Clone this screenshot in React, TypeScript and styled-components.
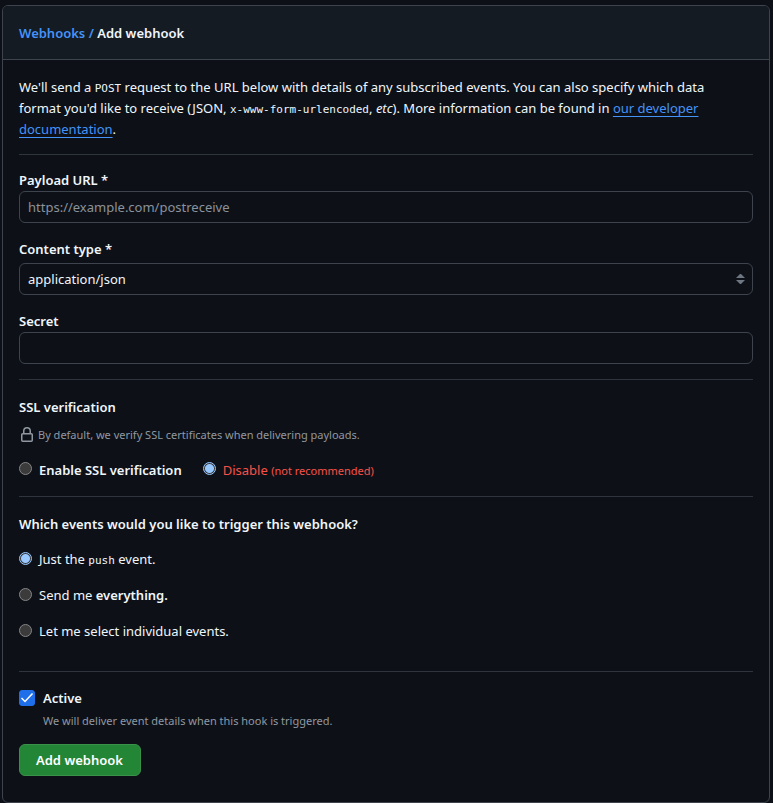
import React, { useState } from "react";
import styled, { createGlobalStyle, css } from "styled-components";

const color = {
  canvas: "#0d1117",
  header: "#151b23",
  border: "#3d444d",
  divider: "#2f353d",
  text: "#f0f6fc",
  muted: "#9198a1",
  placeholder: "#8b929b",
  accent: "#4493f8",
  danger: "#f85149",
};

const GlobalStyle = createGlobalStyle`
  *, *::before, *::after { box-sizing: border-box; }
  body {
    margin: 0;
    background: ${color.canvas};
    color: ${color.text};
    font: 400 13px/21px "Noto Sans", "Open Sans", sans-serif;
  }
`;

const Page = styled.main`
  padding: 5px 3px 0 2px;
`;

const Card = styled.section`
  border: 1px solid ${color.border};
  border-radius: 6px;
  overflow: hidden;
`;

const CardHeader = styled.header`
  padding: 17px 16px 15px;
  background: ${color.header};
  border-bottom: 1px solid ${color.border};
`;

const Title = styled.h1`
  margin: 0;
  font-size: 13px;
  font-weight: 600;
  line-height: 21px;
`;

const CrumbLink = styled.a`
  color: ${color.accent};
  text-decoration: none;
`;

const Form = styled.form`
  display: flex;
  flex-direction: column;
  padding: 17px 16px 26px;
`;

const Intro = styled.p`
  margin: 0;
  padding-right: 16px;
`;

const TextLink = styled.a`
  color: ${color.accent};
  text-decoration: underline;
  text-underline-offset: 3px;
`;

const Code = styled.code`
  font: 11px "DejaVu Sans Mono", "Liberation Mono", monospace;
`;

const Divider = styled.hr`
  width: 100%;
  height: 1px;
  margin: 15px 0;
  border: 0;
  background: ${color.divider};

  ${Intro} + & {
    margin-top: 14px;
  }
`;

const Field = styled.div<{ $gap?: number }>`
  display: flex;
  flex-direction: column;
  gap: ${(p) => p.$gap ?? 0}px;

  & + & {
    margin-top: 16px;
  }
`;

const FieldLabel = styled.label`
  font-weight: 600;
`;

const control = css`
  width: 100%;
  height: 32px;
  padding: 0 8px;
  border: 1px solid ${color.border};
  border-radius: 6px;
  background: ${color.canvas};
  color: ${color.text};
  font: inherit;
`;

const TextInput = styled.input`
  ${control}

  &::placeholder {
    color: ${color.placeholder};
    opacity: 1;
  }
`;

const SelectBox = styled.div`
  display: grid;
  align-items: center;

  & > * {
    grid-area: 1 / 1;
  }
`;

const Select = styled.select`
  ${control}
  appearance: none;
`;

const SelectArrows = styled.svg`
  justify-self: end;
  margin-right: 8px;
  pointer-events: none;
`;

const Group = styled.fieldset`
  display: flex;
  flex-direction: column;
  min-width: 0;
  margin: 0;
  padding: 2px 0 0;
  border: 0;
`;

const GroupTitle = styled.legend`
  float: left;
  width: 100%;
  padding: 0;
  font-weight: 600;
`;

const Note = styled.p`
  display: flex;
  align-items: center;
  gap: 3px;
  margin: 8px 0 0;
  color: ${color.muted};
  font-size: 11px;
  line-height: 18px;
`;

const ChoiceRow = styled.div`
  display: flex;
  flex-wrap: wrap;
  gap: 21px;
  margin-top: 16px;
`;

const ChoiceList = styled.div`
  display: flex;
  flex-direction: column;
  gap: 15px;
  padding: 14px 0;
`;

const Choice = styled.label<{ $bold?: boolean; $danger?: boolean }>`
  display: flex;
  align-items: flex-start;
  gap: 7px;
  font-weight: ${(p) => (p.$bold ? 600 : 400)};
  color: ${(p) => (p.$danger ? color.danger : color.text)};
`;

const Strong = styled.strong`
  font-weight: 600;
`;

const Small = styled.small`
  font-size: 11px;
`;

const Radio = styled.input`
  appearance: none;
  flex: none;
  width: 13px;
  height: 13px;
  margin: 3px 0 0;
  border: 1px solid #858585;
  border-radius: 50%;
  background: #3b3b3b;

  ${ChoiceRow} & {
    margin-top: 2px;
  }

  &:checked {
    border-color: #99c8ff;
    background: radial-gradient(circle, #99c8ff 0 4px, #3b3b3b 5px);
  }
`;

const ActiveRow = styled.div`
  display: grid;
  grid-template-columns: 16px 1fr;
  column-gap: 8px;
  padding-top: 1px;
`;

const CheckMark = styled.span`
  display: grid;
  margin-top: 2px;
  width: 16px;
  height: 16px;

  & > * {
    grid-area: 1 / 1;
  }

  & > svg {
    pointer-events: none;
    visibility: hidden;
  }

  & > input:checked + svg {
    visibility: visible;
  }
`;

const Checkbox = styled.input`
  appearance: none;
  width: 16px;
  height: 16px;
  margin: 0;
  border: 1px solid ${color.border};
  border-radius: 3px;

  &:checked {
    border-color: #1f6feb;
    background: #1f6feb;
  }
`;

const Hint = styled.p`
  grid-column: 2;
  margin: 3px 0 0;
  color: ${color.muted};
  font-size: 11px;
  line-height: 18px;
`;

const SubmitButton = styled.button`
  align-self: flex-start;
  height: 32px;
  margin-top: 14px;
  padding: 0 17px 0 16px;
  border: 1px solid #39914a;
  border-radius: 6px;
  background: #238636;
  color: #fff;
  font: inherit;
  font-weight: 600;
`;

const LockIcon = () => (
  <svg width="16" height="16" viewBox="0 0 16 16" fill="currentColor" aria-hidden="true">
    <path d="M4 4a4 4 0 0 1 8 0v2h.25c.966 0 1.75.784 1.75 1.75v5.5A1.75 1.75 0 0 1 12.25 15h-8.5A1.75 1.75 0 0 1 2 13.25v-5.5C2 6.784 2.784 6 3.75 6H4Zm8.25 3.5h-8.5a.25.25 0 0 0-.25.25v5.5c0 .138.112.25.25.25h8.5a.25.25 0 0 0 .25-.25v-5.5a.25.25 0 0 0-.25-.25ZM10.5 6V4a2.5 2.5 0 1 0-5 0v2Z" />
  </svg>
);

const events = [
  { id: "push", label: <>Just the <Code>push</Code> event.</> },
  { id: "everything", label: <>Send me <Strong>everything.</Strong></> },
  { id: "individual", label: <>Let me select individual events.</> },
];

export default function App() {
  const [ssl, setSsl] = useState("disable");
  const [event, setEvent] = useState("push");
  const [active, setActive] = useState(true);

  return (
    <Page>
      <GlobalStyle />
      <Card>
        <CardHeader>
          <Title>
            <CrumbLink href="#webhooks">Webhooks /</CrumbLink> Add webhook
          </Title>
        </CardHeader>
        <Form onSubmit={(e: React.FormEvent) => e.preventDefault()}>
          <Intro>
            We'll send a <Code>POST</Code> request to the URL below with details of any
            subscribed events. You can also specify which data format you'd like to receive
            (JSON, <Code>x-www-form-urlencoded</Code>, <em>etc</em>). More information can be
            found in <TextLink href="#docs">our developer documentation</TextLink>.
          </Intro>
          <Divider />

          <Field>
            <FieldLabel htmlFor="payload-url">Payload URL *</FieldLabel>
            <TextInput id="payload-url" type="text" placeholder="https://example.com/postreceive" />
          </Field>
          <Field $gap={3}>
            <FieldLabel htmlFor="content-type">Content type *</FieldLabel>
            <SelectBox>
              <Select id="content-type" defaultValue="application/json">
                <option>application/json</option>
                <option>application/x-www-form-urlencoded</option>
              </Select>
              <SelectArrows width="9" height="10" viewBox="0 0 9 10" fill="#6e7681" aria-hidden="true">
                <path d="M0 4 4 0h1l4 4ZM0 6h9l-4 4H4Z" />
              </SelectArrows>
            </SelectBox>
          </Field>
          <Field>
            <FieldLabel htmlFor="secret">Secret</FieldLabel>
            <TextInput id="secret" type="text" />
          </Field>
          <Divider />

          <Group>
            <GroupTitle>SSL verification</GroupTitle>
            <Note>
              <LockIcon />
              By default, we verify SSL certificates when delivering payloads.
            </Note>
            <ChoiceRow>
              <Choice $bold>
                <Radio
                  type="radio"
                  name="ssl"
                  checked={ssl === "enable"}
                  onChange={() => setSsl("enable")}
                />
                Enable SSL verification
              </Choice>
              <Choice $danger>
                <Radio
                  type="radio"
                  name="ssl"
                  checked={ssl === "disable"}
                  onChange={() => setSsl("disable")}
                />
                <span>
                  Disable <Small>(not recommended)</Small>
                </span>
              </Choice>
            </ChoiceRow>
          </Group>
          <Divider />

          <Group>
            <GroupTitle>Which events would you like to trigger this webhook?</GroupTitle>
            <ChoiceList>
              {events.map(({ id, label }) => (
                <Choice key={id}>
                  <Radio
                    type="radio"
                    name="events"
                    checked={event === id}
                    onChange={() => setEvent(id)}
                  />
                  <span>{label}</span>
                </Choice>
              ))}
            </ChoiceList>
          </Group>
          <Divider />

          <ActiveRow>
            <CheckMark>
              <Checkbox
                id="active"
                type="checkbox"
                checked={active}
                onChange={() => setActive(!active)}
              />
              <svg width="16" height="16" viewBox="0 0 16 16" fill="none" aria-hidden="true">
                <path d="m2.5 8 3.5 3.5 7.5-8" stroke="#fff" strokeWidth="1.5" />
              </svg>
            </CheckMark>
            <FieldLabel htmlFor="active">Active</FieldLabel>
            <Hint>We will deliver event details when this hook is triggered.</Hint>
          </ActiveRow>
          <SubmitButton type="submit">Add webhook</SubmitButton>
        </Form>
      </Card>
    </Page>
  );
}
